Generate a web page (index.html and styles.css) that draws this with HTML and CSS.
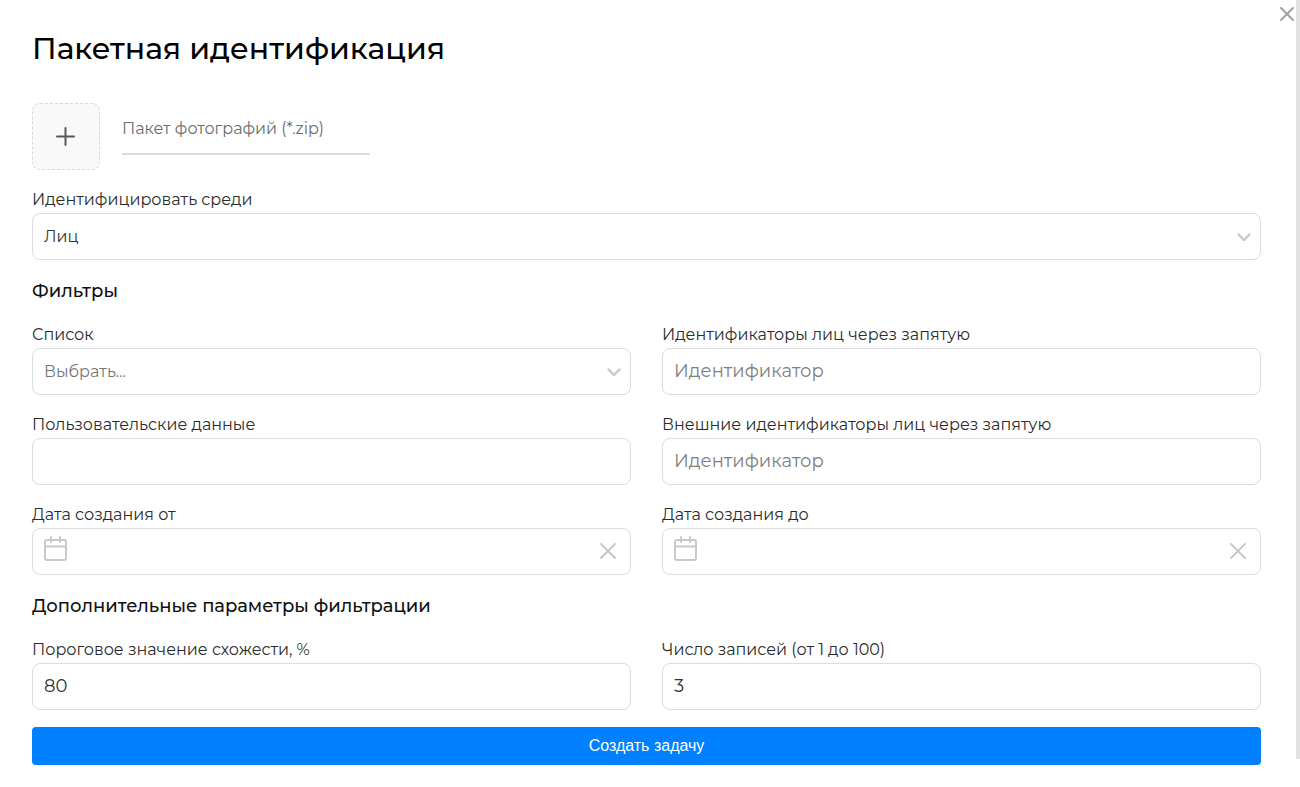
FILE: index.html
```html
<!DOCTYPE html>
<html lang="ru">
<head>
<meta charset="utf-8">
<meta name="viewport" content="width=device-width, initial-scale=1">
<title>Пакетная идентификация</title>
<link rel="stylesheet" href="styles.css">
</head>
<body>
<main class="dialog">
  <button class="close" type="button" aria-label="Закрыть">
    <svg width="14" height="14" viewBox="0 0 14 14"><path d="M1 1l12 12M13 1L1 13"/></svg>
  </button>
  <div class="scrollbar"></div>
  <h1 class="title">Пакетная идентификация</h1>
  <form class="form">
    <div class="upload">
      <button class="upload-add" type="button" aria-label="Добавить файл">
        <svg width="20" height="20" viewBox="0 0 20 20"><path d="M9.500 1v17M1 9.500h17"/></svg>
      </button>
      <input class="upload-name" type="text" placeholder="Пакет фотографий (*.zip)" aria-label="Пакет фотографий" readonly>
    </div>

    <div class="field">
      <label class="label" for="among">Идентифицировать среди</label>
      <div class="control">
        <select class="input select" id="among"><option>Лиц</option></select>
        <svg class="chevron" width="14" height="9" viewBox="0 0 14 9"><path d="M1.500 1.500L7 7l5.500-5.500"/></svg>
      </div>
    </div>

    <h2 class="section">Фильтры</h2>
    <div class="grid">
      <div class="field">
        <label class="label" for="list">Список</label>
        <div class="control">
          <select class="input select select-empty" id="list"><option>Выбрать...</option></select>
          <svg class="chevron" width="14" height="9" viewBox="0 0 14 9"><path d="M1.500 1.500L7 7l5.500-5.500"/></svg>
        </div>
      </div>
      <div class="field">
        <label class="label" for="ids">Идентификаторы лиц через запятую</label>
        <input class="input" id="ids" type="text" placeholder="Идентификатор">
      </div>
      <div class="field">
        <label class="label" for="user-data">Пользовательские данные</label>
        <input class="input" id="user-data" type="text">
      </div>
      <div class="field">
        <label class="label" for="ext-ids">Внешние идентификаторы лиц через запятую</label>
        <input class="input" id="ext-ids" type="text" placeholder="Идентификатор">
      </div>
      <div class="field">
        <label class="label" for="date-from">Дата создания от</label>
        <div class="control">
          <input class="input input-date" id="date-from" type="text">
          <svg class="calendar" width="24" height="26" viewBox="0 0 24 26"><rect x="1" y="4" width="21" height="20" rx="2"/><path d="M1 10.500h21M7 1v5M16 1v5"/></svg>
          <button class="clear" type="button" aria-label="Очистить дату от">
            <svg width="18" height="18" viewBox="0 0 18 18"><path d="M2 2l14 14M16 2L2 16"/></svg>
          </button>
        </div>
      </div>
      <div class="field">
        <label class="label" for="date-to">Дата создания до</label>
        <div class="control">
          <input class="input input-date" id="date-to" type="text">
          <svg class="calendar" width="24" height="26" viewBox="0 0 24 26"><rect x="1" y="4" width="21" height="20" rx="2"/><path d="M1 10.500h21M7 1v5M16 1v5"/></svg>
          <button class="clear" type="button" aria-label="Очистить дату до">
            <svg width="18" height="18" viewBox="0 0 18 18"><path d="M2 2l14 14M16 2L2 16"/></svg>
          </button>
        </div>
      </div>
    </div>

    <h2 class="section">Дополнительные параметры фильтрации</h2>
    <div class="grid">
      <div class="field">
        <label class="label" for="threshold">Пороговое значение схожести, %</label>
        <input class="input" id="threshold" type="text" value="80">
      </div>
      <div class="field">
        <label class="label" for="limit">Число записей (от 1 до 100)</label>
        <input class="input" id="limit" type="text" value="3">
      </div>
    </div>
    <button class="submit" type="submit">Создать задачу</button>
  </form>
</main>
</body>
</html>
```

FILE: styles.css
```css
* {
  box-sizing: border-box;
}

body {
  margin: 0;
  background: #fff;
  color: #000;
  font-family: Montserrat, Inter, "Open Sans", sans-serif;
  font-size: 16px;
  font-weight: 400;
}

svg {
  display: block;
  fill: none;
  stroke-linecap: round;
  stroke-linejoin: round;
}

button {
  padding: 0;
  border: 0;
  background: none;
  cursor: pointer;
}

.dialog {
  position: relative;
  padding: 29px 39px 22px 32px;
}

.close {
  position: absolute;
  top: 7px;
  right: 6px;
  stroke: #a0a2a6;
  stroke-width: 2;
}

.scrollbar {
  position: absolute;
  top: 0;
  right: 0;
  bottom: 28px;
  width: 4px;
  background: #e1e1e1;
}

.title {
  margin: 0 0 34px;
  font-size: 30px;
  font-weight: 500;
  line-height: 40px;
}

.upload {
  display: flex;
  gap: 22px;
  margin-bottom: 15px;
}

.upload-add {
  display: grid;
  place-items: center;
  width: 68px;
  height: 67px;
  border: 1px dashed #d9d9dc;
  border-radius: 8px;
  background: #f9f9f9;
  stroke: #55585d;
  stroke-width: 2;
}

.upload-name {
  width: 248px;
  height: 52px;
  padding: 0;
  border: 0;
  border-bottom: 2px solid #dcdce0;
  background: none;
  font: inherit;
}

.upload-name::placeholder {
  color: #6a6d72;
  opacity: 1;
}

.grid {
  display: grid;
  grid-template-columns: 1fr 1fr;
  gap: 15px 31px;
}

.label {
  display: block;
  padding-top: 2px;
  color: #2b2b2b;
  line-height: 26px;
}

.control {
  position: relative;
}

.input {
  display: block;
  width: 100%;
  height: 47px;
  padding: 0 11px 2px;
  border: 1px solid #dcdce0;
  border-radius: 8px;
  background: #fff;
  color: #333;
  font: inherit;
  font-size: 18px;
}

.input::placeholder {
  color: #808080;
  opacity: 1;
}

.select {
  padding-bottom: 0;
  appearance: none;
  font-size: 16px;
}

.select-empty {
  color: #777;
}

.chevron {
  position: absolute;
  top: 20px;
  right: 10px;
  stroke: #ccc;
  stroke-width: 2.5;
  pointer-events: none;
}

.input-date {
  padding: 0 48px;
}

.calendar {
  position: absolute;
  top: 8px;
  left: 12px;
  stroke: #c8c9cd;
  stroke-width: 2;
}

.clear {
  position: absolute;
  top: 14px;
  right: 14px;
  stroke: #c8c9cd;
  stroke-width: 2;
}

.section {
  margin: 0;
  padding-top: 2px;
  color: #111;
  font-size: 18px;
  font-weight: 500;
  line-height: 58px;
}

.submit {
  width: 100%;
  height: 38px;
  margin-top: 17px;
  border-radius: 4px;
  background: #007fff;
  color: #fff;
  font: 400 16px/36px "Liberation Sans", sans-serif;
}
```
